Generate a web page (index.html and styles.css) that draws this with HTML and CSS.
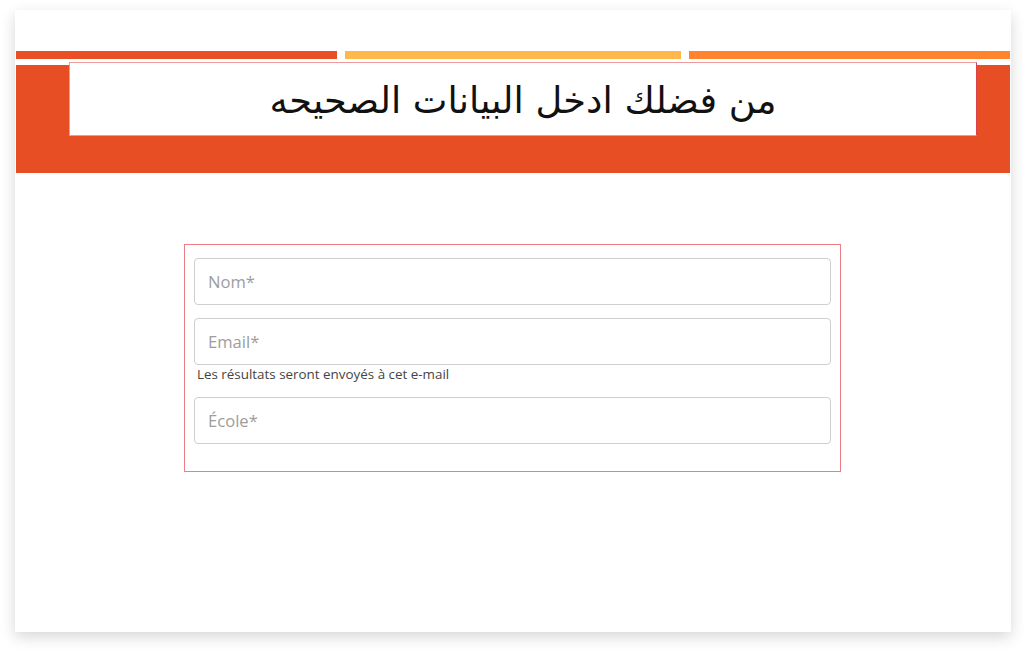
FILE: index.html
```html
<!DOCTYPE html>
<html lang="fr">
<head>
<meta charset="utf-8">
<title>Formulaire</title>
<link rel="stylesheet" href="styles.css">
</head>
<body>
<div class="card">
  <div class="stripes">
    <div class="stripe stripe-red"></div>
    <div class="stripe stripe-yellow"></div>
    <div class="stripe stripe-orange"></div>
  </div>
  <div class="band">
    <div class="title-box">
      <h1 class="title" dir="rtl" lang="ar">من فضلك ادخل البيانات الصحيحه</h1>
    </div>
  </div>
  <form class="form">
    <input class="field" type="text" placeholder="Nom*">
    <input class="field field-email" type="email" placeholder="Email*">
    <div class="help">Les résultats seront envoyés à cet e-mail</div>
    <input class="field" type="text" placeholder="École*">
  </form>
</div>
</body>
</html>
```
FILE: styles.css
```css
* { box-sizing: border-box; }
html, body { margin: 0; padding: 0; background: #fff; }
body {
  font-family: "Open Sans", "DejaVu Sans", sans-serif;
  padding: 10px 16px 20px 15px;
}
.card {
  width: 996px;
  height: 622px;
  background: #fff;
  padding: 41px 1px 0 1px;
  box-shadow: 0 5px 14px rgba(0,0,0,0.16);
}
.stripes {
  display: grid;
  grid-template-columns: 321px 336px 321px;
  column-gap: 8px;
  height: 8px;
}
.stripe-red { background: #e94e25; }
.stripe-yellow { background: #ffb94a; }
.stripe-orange { background: #ff842b; }
.band {
  margin-top: 6px;
  height: 108px;
  background: #e84e24;
  padding: 0 33px 0 53px;
}
.title-box {
  position: relative;
  top: -3px;
  height: 74px;
  background: #fff;
  border: 1px solid #ee9a9c;
  border-right-color: #d9434a;
  display: flex;
  align-items: center;
  justify-content: center;
}
.title {
  margin: 0;
  font-family: "DejaVu Sans", sans-serif;
  font-weight: normal;
  font-size: 36.8px;
  line-height: 44px;
  color: #111;
  padding-top: 4px;
}
.form {
  width: 657px;
  margin: 71px auto 0 168px;
  border: 1px solid #ec7f86;
  padding: 13px 9px 27px 9px;
  display: flex;
  flex-direction: column;
}
.field {
  display: block;
  width: 100%;
  height: 47px;
  border: 1px solid #cfcfcf;
  border-radius: 4px;
  padding: 0 13px;
  font-family: "Open Sans", sans-serif;
  font-size: 16.6px;
  color: #333;
  background: #fff;
  outline: none;
}
.field::placeholder { color: #9d9d9d; }
.field + .field { margin-top: 13px; }
.field-email { margin-top: 13px; }
.help {
  font-family: "Open Sans", sans-serif;
  font-size: 13.4px;
  line-height: 18px;
  color: #444;
  margin: 0 0 14px 3px;
}
```
